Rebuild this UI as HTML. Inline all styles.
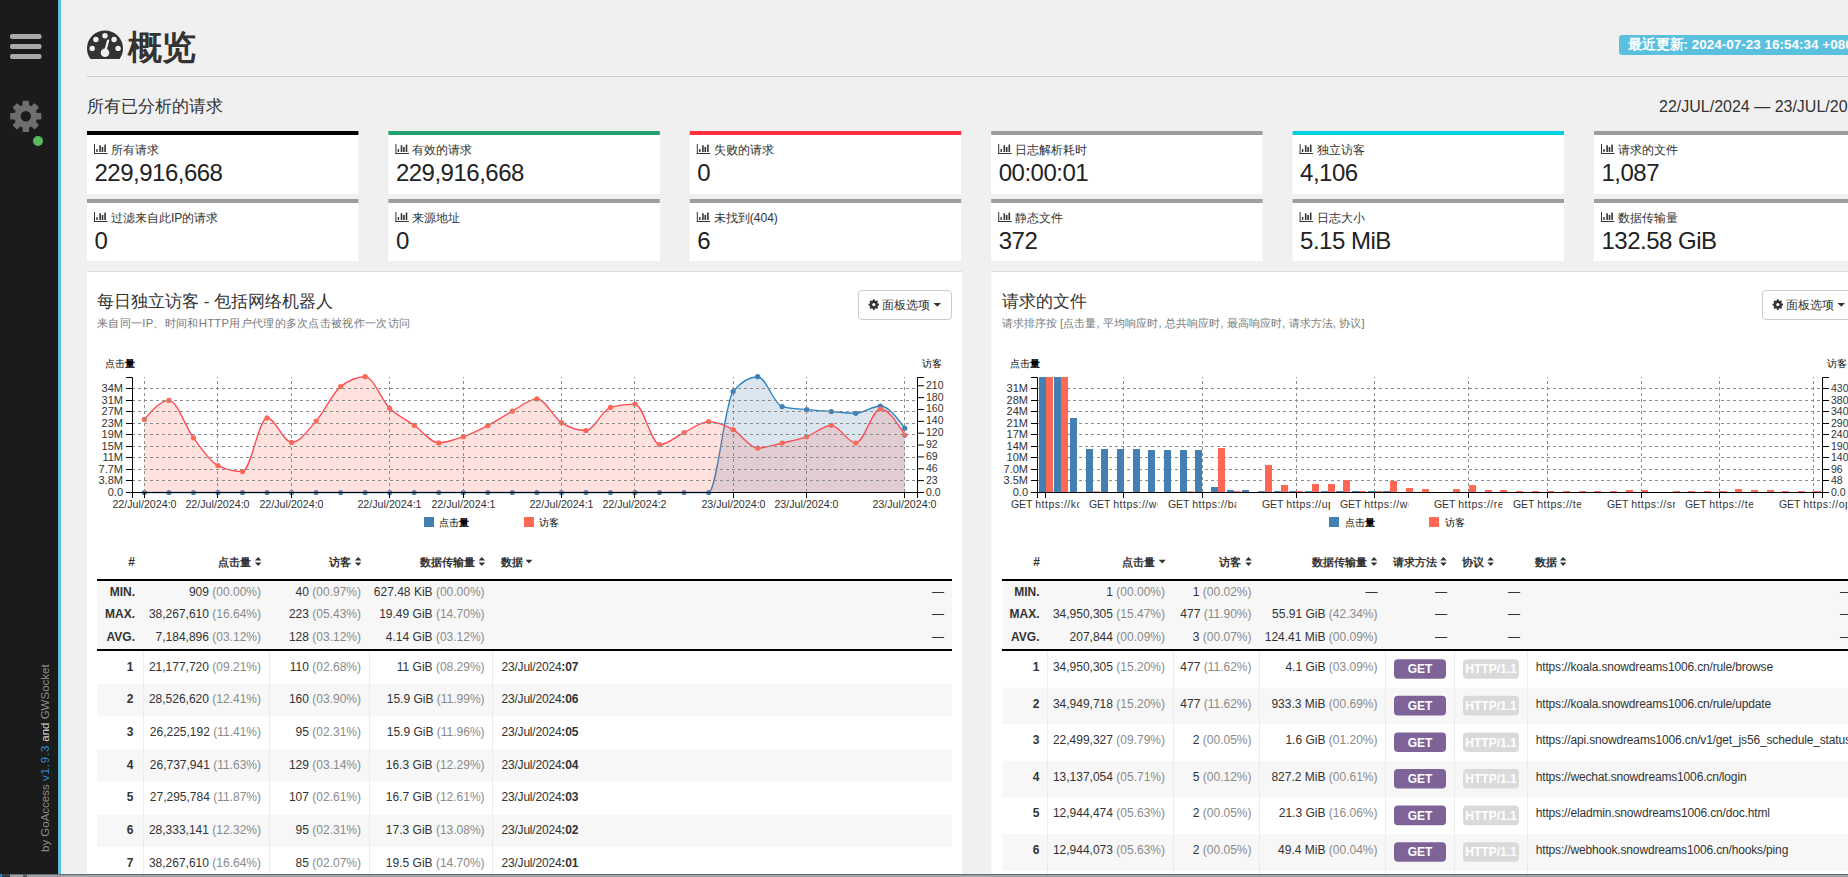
<!DOCTYPE html><html><head><meta charset="utf-8"><title>GoAccess</title><style>html,body{margin:0;padding:0;overflow:hidden;background:#f0f0f0;width:1848px;height:877px}svg{display:block;font-family:"Liberation Sans",sans-serif}</style></head><body><svg width="1848" height="877" viewBox="0 0 1848 877"><rect x="0" y="0" width="1848" height="877" fill="#f0f0f0" /><rect x="0" y="0" width="58" height="877" fill="#1b1b1b" /><rect x="58" y="0" width="3" height="877" fill="#5bc0de" /><rect x="10" y="34" width="31.5" height="5" fill="#a9a9a9" rx="2"/><rect x="10" y="44" width="31.5" height="5" fill="#a9a9a9" rx="2"/><rect x="10" y="54" width="31.5" height="5" fill="#a9a9a9" rx="2"/><g fill="#6e6e6e"><circle cx="25.8" cy="116.3" r="11.5"/><rect x="22.55" y="100.7" width="6.5" height="6.1" rx="1" transform="rotate(0.0 25.8 116.3)"/><rect x="22.55" y="100.7" width="6.5" height="6.1" rx="1" transform="rotate(45.0 25.8 116.3)"/><rect x="22.55" y="100.7" width="6.5" height="6.1" rx="1" transform="rotate(90.0 25.8 116.3)"/><rect x="22.55" y="100.7" width="6.5" height="6.1" rx="1" transform="rotate(135.0 25.8 116.3)"/><rect x="22.55" y="100.7" width="6.5" height="6.1" rx="1" transform="rotate(180.0 25.8 116.3)"/><rect x="22.55" y="100.7" width="6.5" height="6.1" rx="1" transform="rotate(225.0 25.8 116.3)"/><rect x="22.55" y="100.7" width="6.5" height="6.1" rx="1" transform="rotate(270.0 25.8 116.3)"/><rect x="22.55" y="100.7" width="6.5" height="6.1" rx="1" transform="rotate(315.0 25.8 116.3)"/></g><circle cx="25.8" cy="116.3" r="5.2" fill="#1b1b1b"/><circle cx="38" cy="141" r="5" fill="#5cb85c"/><text transform="translate(49.3,852) rotate(-90)" font-size="11.5" fill="#8a8a8a">by GoAccess <tspan fill="#2a8ed8" letter-spacing="0.8">v1.9.3</tspan> <tspan fill="#d8d8d8">and</tspan> GWSocket</text><g><path d="M90.4,59 A18,18 0 1 1 119.6,59 Z" fill="#333"/><circle cx="105" cy="35.8" r="2.7" fill="#f0f0f0"/><circle cx="95.9" cy="39.5" r="2.7" fill="#f0f0f0"/><circle cx="114.1" cy="39.5" r="2.7" fill="#f0f0f0"/><circle cx="92.2" cy="48.4" r="2.7" fill="#f0f0f0"/><circle cx="118.1" cy="48.4" r="2.7" fill="#f0f0f0"/><circle cx="105" cy="52.7" r="4.3" fill="#f0f0f0"/><line x1="105" y1="52" x2="108.1" y2="40.6" stroke="#f0f0f0" stroke-width="2.3" stroke-linecap="round"/></g><text x="127.5" y="59" font-size="33.5" fill="#333" font-weight="bold" text-anchor="start" >概览</text><rect x="87" y="76" width="1761" height="1" fill="#cfcfcf" /><rect x="1619" y="35" width="300" height="20" fill="#5bc0de" rx="3"/><text x="1627.5" y="49.1" font-size="13.5" fill="#fff" font-weight="bold" text-anchor="start" >最近更新: 2024-07-23 16:54:34 +0800</text><text x="87" y="111.5" font-size="17" fill="#333" font-weight="normal" text-anchor="start" >所有已分析的请求</text><text x="1659" y="112" font-size="16" fill="#333" font-weight="normal" text-anchor="start" >22/JUL/2024 — 23/JUL/2024</text><rect x="87.0" y="131" width="271.4" height="4" fill="#000" /><rect x="87.0" y="135" width="271.4" height="59" fill="#fff" /><g fill="#333"><rect x="94.0" y="144" width="1" height="10"/><rect x="94.0" y="153" width="13.5" height="1"/><rect x="96.3" y="149" width="1.4" height="3"/><rect x="99.3" y="145.3" width="1.6" height="6.7"/><rect x="101.7" y="147" width="1.6" height="5"/><rect x="104.3" y="144.6" width="1.6" height="7.4"/></g><text x="111.0" y="154" font-size="12" fill="#333" font-weight="normal" text-anchor="start" >所有请求</text><text x="94.5" y="180.5" font-size="24" fill="#222" font-weight="normal" text-anchor="start" letter-spacing="-0.5">229,916,668</text><rect x="388.4" y="131" width="271.4" height="4" fill="#23a16f" /><rect x="388.4" y="135" width="271.4" height="59" fill="#fff" /><g fill="#333"><rect x="395.4" y="144" width="1" height="10"/><rect x="395.4" y="153" width="13.5" height="1"/><rect x="397.7" y="149" width="1.4" height="3"/><rect x="400.7" y="145.3" width="1.6" height="6.7"/><rect x="403.09999999999997" y="147" width="1.6" height="5"/><rect x="405.7" y="144.6" width="1.6" height="7.4"/></g><text x="412.4" y="154" font-size="12" fill="#333" font-weight="normal" text-anchor="start" >有效的请求</text><text x="395.9" y="180.5" font-size="24" fill="#222" font-weight="normal" text-anchor="start" letter-spacing="-0.5">229,916,668</text><rect x="689.8" y="131" width="271.4" height="4" fill="#ff2f3f" /><rect x="689.8" y="135" width="271.4" height="59" fill="#fff" /><g fill="#333"><rect x="696.8" y="144" width="1" height="10"/><rect x="696.8" y="153" width="13.5" height="1"/><rect x="699.0999999999999" y="149" width="1.4" height="3"/><rect x="702.0999999999999" y="145.3" width="1.6" height="6.7"/><rect x="704.5" y="147" width="1.6" height="5"/><rect x="707.0999999999999" y="144.6" width="1.6" height="7.4"/></g><text x="713.8" y="154" font-size="12" fill="#333" font-weight="normal" text-anchor="start" >失败的请求</text><text x="697.3" y="180.5" font-size="24" fill="#222" font-weight="normal" text-anchor="start" letter-spacing="-0.5">0</text><rect x="991.1999999999999" y="131" width="271.4" height="4" fill="#9e9e9e" /><rect x="991.1999999999999" y="135" width="271.4" height="59" fill="#fff" /><g fill="#333"><rect x="998.1999999999999" y="144" width="1" height="10"/><rect x="998.1999999999999" y="153" width="13.5" height="1"/><rect x="1000.4999999999999" y="149" width="1.4" height="3"/><rect x="1003.4999999999999" y="145.3" width="1.6" height="6.7"/><rect x="1005.9" y="147" width="1.6" height="5"/><rect x="1008.4999999999999" y="144.6" width="1.6" height="7.4"/></g><text x="1015.1999999999999" y="154" font-size="12" fill="#333" font-weight="normal" text-anchor="start" >日志解析耗时</text><text x="998.6999999999999" y="180.5" font-size="24" fill="#222" font-weight="normal" text-anchor="start" letter-spacing="-0.5">00:00:01</text><rect x="1292.6" y="131" width="271.4" height="4" fill="#00d1e0" /><rect x="1292.6" y="135" width="271.4" height="59" fill="#fff" /><g fill="#333"><rect x="1299.6" y="144" width="1" height="10"/><rect x="1299.6" y="153" width="13.5" height="1"/><rect x="1301.8999999999999" y="149" width="1.4" height="3"/><rect x="1304.8999999999999" y="145.3" width="1.6" height="6.7"/><rect x="1307.3" y="147" width="1.6" height="5"/><rect x="1309.8999999999999" y="144.6" width="1.6" height="7.4"/></g><text x="1316.6" y="154" font-size="12" fill="#333" font-weight="normal" text-anchor="start" >独立访客</text><text x="1300.1" y="180.5" font-size="24" fill="#222" font-weight="normal" text-anchor="start" letter-spacing="-0.5">4,106</text><rect x="1594.0" y="131" width="271.4" height="4" fill="#9e9e9e" /><rect x="1594.0" y="135" width="271.4" height="59" fill="#fff" /><g fill="#333"><rect x="1601.0" y="144" width="1" height="10"/><rect x="1601.0" y="153" width="13.5" height="1"/><rect x="1603.3" y="149" width="1.4" height="3"/><rect x="1606.3" y="145.3" width="1.6" height="6.7"/><rect x="1608.7" y="147" width="1.6" height="5"/><rect x="1611.3" y="144.6" width="1.6" height="7.4"/></g><text x="1618.0" y="154" font-size="12" fill="#333" font-weight="normal" text-anchor="start" >请求的文件</text><text x="1601.5" y="180.5" font-size="24" fill="#222" font-weight="normal" text-anchor="start" letter-spacing="-0.5">1,087</text><rect x="87.0" y="199" width="271.4" height="4" fill="#9e9e9e" /><rect x="87.0" y="203" width="271.4" height="58" fill="#fff" /><g fill="#333"><rect x="94.0" y="212" width="1" height="10"/><rect x="94.0" y="221" width="13.5" height="1"/><rect x="96.3" y="217" width="1.4" height="3"/><rect x="99.3" y="213.3" width="1.6" height="6.7"/><rect x="101.7" y="215" width="1.6" height="5"/><rect x="104.3" y="212.6" width="1.6" height="7.4"/></g><text x="111.0" y="222" font-size="12" fill="#333" font-weight="normal" text-anchor="start" >过滤来自此IP的请求</text><text x="94.5" y="248.5" font-size="24" fill="#222" font-weight="normal" text-anchor="start" letter-spacing="-0.5">0</text><rect x="388.4" y="199" width="271.4" height="4" fill="#9e9e9e" /><rect x="388.4" y="203" width="271.4" height="58" fill="#fff" /><g fill="#333"><rect x="395.4" y="212" width="1" height="10"/><rect x="395.4" y="221" width="13.5" height="1"/><rect x="397.7" y="217" width="1.4" height="3"/><rect x="400.7" y="213.3" width="1.6" height="6.7"/><rect x="403.09999999999997" y="215" width="1.6" height="5"/><rect x="405.7" y="212.6" width="1.6" height="7.4"/></g><text x="412.4" y="222" font-size="12" fill="#333" font-weight="normal" text-anchor="start" >来源地址</text><text x="395.9" y="248.5" font-size="24" fill="#222" font-weight="normal" text-anchor="start" letter-spacing="-0.5">0</text><rect x="689.8" y="199" width="271.4" height="4" fill="#9e9e9e" /><rect x="689.8" y="203" width="271.4" height="58" fill="#fff" /><g fill="#333"><rect x="696.8" y="212" width="1" height="10"/><rect x="696.8" y="221" width="13.5" height="1"/><rect x="699.0999999999999" y="217" width="1.4" height="3"/><rect x="702.0999999999999" y="213.3" width="1.6" height="6.7"/><rect x="704.5" y="215" width="1.6" height="5"/><rect x="707.0999999999999" y="212.6" width="1.6" height="7.4"/></g><text x="713.8" y="222" font-size="12" fill="#333" font-weight="normal" text-anchor="start" >未找到(404)</text><text x="697.3" y="248.5" font-size="24" fill="#222" font-weight="normal" text-anchor="start" letter-spacing="-0.5">6</text><rect x="991.1999999999999" y="199" width="271.4" height="4" fill="#9e9e9e" /><rect x="991.1999999999999" y="203" width="271.4" height="58" fill="#fff" /><g fill="#333"><rect x="998.1999999999999" y="212" width="1" height="10"/><rect x="998.1999999999999" y="221" width="13.5" height="1"/><rect x="1000.4999999999999" y="217" width="1.4" height="3"/><rect x="1003.4999999999999" y="213.3" width="1.6" height="6.7"/><rect x="1005.9" y="215" width="1.6" height="5"/><rect x="1008.4999999999999" y="212.6" width="1.6" height="7.4"/></g><text x="1015.1999999999999" y="222" font-size="12" fill="#333" font-weight="normal" text-anchor="start" >静态文件</text><text x="998.6999999999999" y="248.5" font-size="24" fill="#222" font-weight="normal" text-anchor="start" letter-spacing="-0.5">372</text><rect x="1292.6" y="199" width="271.4" height="4" fill="#9e9e9e" /><rect x="1292.6" y="203" width="271.4" height="58" fill="#fff" /><g fill="#333"><rect x="1299.6" y="212" width="1" height="10"/><rect x="1299.6" y="221" width="13.5" height="1"/><rect x="1301.8999999999999" y="217" width="1.4" height="3"/><rect x="1304.8999999999999" y="213.3" width="1.6" height="6.7"/><rect x="1307.3" y="215" width="1.6" height="5"/><rect x="1309.8999999999999" y="212.6" width="1.6" height="7.4"/></g><text x="1316.6" y="222" font-size="12" fill="#333" font-weight="normal" text-anchor="start" >日志大小</text><text x="1300.1" y="248.5" font-size="24" fill="#222" font-weight="normal" text-anchor="start" letter-spacing="-0.5">5.15 MiB</text><rect x="1594.0" y="199" width="271.4" height="4" fill="#9e9e9e" /><rect x="1594.0" y="203" width="271.4" height="58" fill="#fff" /><g fill="#333"><rect x="1601.0" y="212" width="1" height="10"/><rect x="1601.0" y="221" width="13.5" height="1"/><rect x="1603.3" y="217" width="1.4" height="3"/><rect x="1606.3" y="213.3" width="1.6" height="6.7"/><rect x="1608.7" y="215" width="1.6" height="5"/><rect x="1611.3" y="212.6" width="1.6" height="7.4"/></g><text x="1618.0" y="222" font-size="12" fill="#333" font-weight="normal" text-anchor="start" >数据传输量</text><text x="1601.5" y="248.5" font-size="24" fill="#222" font-weight="normal" text-anchor="start" letter-spacing="-0.5">132.58 GiB</text><rect x="87" y="271" width="875" height="606" fill="#fff" /><rect x="87" y="271" width="875" height="1" fill="#dcdcdc" /><rect x="991.5" y="271" width="875" height="606" fill="#fff" /><rect x="991.5" y="271" width="875" height="1" fill="#dcdcdc" /><text x="97" y="307" font-size="17" fill="#333" font-weight="normal" text-anchor="start" >每日独立访客 - 包括网络机器人</text><text x="97" y="327" font-size="11.3" fill="#777" font-weight="normal" text-anchor="start" letter-spacing="0.3">来自同一IP、时间和HTTP用户代理的多次点击被视作一次访问</text><rect x="858.5" y="290.5" width="93" height="29" rx="3.5" fill="#fff" stroke="#cccccc" stroke-width="1"/><g fill="#333"><circle cx="873.8" cy="304.6" r="3.9"/><rect x="872.65" y="299.3" width="2.3" height="3.4" rx="1" transform="rotate(0.0 873.8 304.6)"/><rect x="872.65" y="299.3" width="2.3" height="3.4" rx="1" transform="rotate(45.0 873.8 304.6)"/><rect x="872.65" y="299.3" width="2.3" height="3.4" rx="1" transform="rotate(90.0 873.8 304.6)"/><rect x="872.65" y="299.3" width="2.3" height="3.4" rx="1" transform="rotate(135.0 873.8 304.6)"/><rect x="872.65" y="299.3" width="2.3" height="3.4" rx="1" transform="rotate(180.0 873.8 304.6)"/><rect x="872.65" y="299.3" width="2.3" height="3.4" rx="1" transform="rotate(225.0 873.8 304.6)"/><rect x="872.65" y="299.3" width="2.3" height="3.4" rx="1" transform="rotate(270.0 873.8 304.6)"/><rect x="872.65" y="299.3" width="2.3" height="3.4" rx="1" transform="rotate(315.0 873.8 304.6)"/></g><circle cx="873.8" cy="304.6" r="1.6" fill="#fff"/><text x="882" y="309" font-size="12" fill="#333" font-weight="normal" text-anchor="start" >面板选项</text><path d="M933.5,303.0 L941.0,303.0 L937.25,306.8 Z" fill="#333"/><text x="1001.5" y="307" font-size="17" fill="#333" font-weight="normal" text-anchor="start" >请求的文件</text><text x="1001.5" y="327" font-size="11.3" fill="#777" font-weight="normal" text-anchor="start" letter-spacing="0.08">请求排序按 [点击量, 平均响应时, 总共响应时, 最高响应时, 请求方法, 协议]</text><rect x="1762.5" y="290.5" width="93" height="29" rx="3.5" fill="#fff" stroke="#cccccc" stroke-width="1"/><g fill="#333"><circle cx="1777.8" cy="304.6" r="3.9"/><rect x="1776.6499999999999" y="299.3" width="2.3" height="3.4" rx="1" transform="rotate(0.0 1777.8 304.6)"/><rect x="1776.6499999999999" y="299.3" width="2.3" height="3.4" rx="1" transform="rotate(45.0 1777.8 304.6)"/><rect x="1776.6499999999999" y="299.3" width="2.3" height="3.4" rx="1" transform="rotate(90.0 1777.8 304.6)"/><rect x="1776.6499999999999" y="299.3" width="2.3" height="3.4" rx="1" transform="rotate(135.0 1777.8 304.6)"/><rect x="1776.6499999999999" y="299.3" width="2.3" height="3.4" rx="1" transform="rotate(180.0 1777.8 304.6)"/><rect x="1776.6499999999999" y="299.3" width="2.3" height="3.4" rx="1" transform="rotate(225.0 1777.8 304.6)"/><rect x="1776.6499999999999" y="299.3" width="2.3" height="3.4" rx="1" transform="rotate(270.0 1777.8 304.6)"/><rect x="1776.6499999999999" y="299.3" width="2.3" height="3.4" rx="1" transform="rotate(315.0 1777.8 304.6)"/></g><circle cx="1777.8" cy="304.6" r="1.6" fill="#fff"/><text x="1786" y="309" font-size="12" fill="#333" font-weight="normal" text-anchor="start" >面板选项</text><path d="M1837.5,303.0 L1845.0,303.0 L1841.25,306.8 Z" fill="#333"/><path d="M144.40,492.50C152.58,492.50,160.75,492.50,168.93,492.50C177.11,492.50,185.28,492.50,193.46,492.50C201.64,492.50,209.81,492.50,217.99,492.50C226.17,492.50,234.34,492.50,242.52,492.50C250.70,492.50,258.87,492.50,267.05,492.50C275.23,492.50,283.40,492.50,291.58,492.50C299.76,492.50,307.93,492.50,316.11,492.50C324.29,492.50,332.46,492.50,340.64,492.50C348.82,492.50,356.99,492.50,365.17,492.50C373.35,492.50,381.52,492.50,389.70,492.50C397.88,492.50,406.05,492.50,414.23,492.50C422.41,492.50,430.58,492.50,438.76,492.50C446.94,492.50,455.11,492.50,463.29,492.50C471.47,492.50,479.64,492.50,487.82,492.50C496.00,492.50,504.17,492.50,512.35,492.50C520.53,492.50,528.70,492.50,536.88,492.50C545.06,492.50,553.23,492.50,561.41,492.50C569.59,492.50,577.76,492.50,585.94,492.50C594.12,492.50,602.29,492.50,610.47,492.50C618.65,492.50,626.82,492.50,635.00,492.50C643.18,492.50,651.35,492.50,659.53,492.50C667.71,492.50,675.88,492.50,684.06,492.50C692.24,492.50,700.41,492.50,708.59,492.50C716.77,492.50,724.94,401.37,733.12,391.50C741.30,381.63,749.47,376.70,757.65,376.70C765.83,376.70,774.00,404.53,782.18,406.60C790.36,408.67,798.53,408.88,806.71,409.70C814.89,410.52,823.06,410.90,831.24,411.50C839.42,412.10,847.59,413.30,855.77,413.30C863.95,413.30,872.12,406.00,880.30,406.00C888.48,406.00,896.65,417.15,904.83,428.30 L904.83,492.5 L144.4,492.5 Z" fill="#447fb3" fill-opacity="0.2"/><path d="M144.40,492.50C152.58,492.50,160.75,492.50,168.93,492.50C177.11,492.50,185.28,492.50,193.46,492.50C201.64,492.50,209.81,492.50,217.99,492.50C226.17,492.50,234.34,492.50,242.52,492.50C250.70,492.50,258.87,492.50,267.05,492.50C275.23,492.50,283.40,492.50,291.58,492.50C299.76,492.50,307.93,492.50,316.11,492.50C324.29,492.50,332.46,492.50,340.64,492.50C348.82,492.50,356.99,492.50,365.17,492.50C373.35,492.50,381.52,492.50,389.70,492.50C397.88,492.50,406.05,492.50,414.23,492.50C422.41,492.50,430.58,492.50,438.76,492.50C446.94,492.50,455.11,492.50,463.29,492.50C471.47,492.50,479.64,492.50,487.82,492.50C496.00,492.50,504.17,492.50,512.35,492.50C520.53,492.50,528.70,492.50,536.88,492.50C545.06,492.50,553.23,492.50,561.41,492.50C569.59,492.50,577.76,492.50,585.94,492.50C594.12,492.50,602.29,492.50,610.47,492.50C618.65,492.50,626.82,492.50,635.00,492.50C643.18,492.50,651.35,492.50,659.53,492.50C667.71,492.50,675.88,492.50,684.06,492.50C692.24,492.50,700.41,492.50,708.59,492.50C716.77,492.50,724.94,401.37,733.12,391.50C741.30,381.63,749.47,376.70,757.65,376.70C765.83,376.70,774.00,404.53,782.18,406.60C790.36,408.67,798.53,408.88,806.71,409.70C814.89,410.52,823.06,410.90,831.24,411.50C839.42,412.10,847.59,413.30,855.77,413.30C863.95,413.30,872.12,406.00,880.30,406.00C888.48,406.00,896.65,417.15,904.83,428.30" fill="none" stroke="#2683c6" stroke-width="1.35"/><circle cx="144.40" cy="492.5" r="2.6" fill="#447fb3"/><circle cx="168.93" cy="492.5" r="2.6" fill="#447fb3"/><circle cx="193.46" cy="492.5" r="2.6" fill="#447fb3"/><circle cx="217.99" cy="492.5" r="2.6" fill="#447fb3"/><circle cx="242.52" cy="492.5" r="2.6" fill="#447fb3"/><circle cx="267.05" cy="492.5" r="2.6" fill="#447fb3"/><circle cx="291.58" cy="492.5" r="2.6" fill="#447fb3"/><circle cx="316.11" cy="492.5" r="2.6" fill="#447fb3"/><circle cx="340.64" cy="492.5" r="2.6" fill="#447fb3"/><circle cx="365.17" cy="492.5" r="2.6" fill="#447fb3"/><circle cx="389.70" cy="492.5" r="2.6" fill="#447fb3"/><circle cx="414.23" cy="492.5" r="2.6" fill="#447fb3"/><circle cx="438.76" cy="492.5" r="2.6" fill="#447fb3"/><circle cx="463.29" cy="492.5" r="2.6" fill="#447fb3"/><circle cx="487.82" cy="492.5" r="2.6" fill="#447fb3"/><circle cx="512.35" cy="492.5" r="2.6" fill="#447fb3"/><circle cx="536.88" cy="492.5" r="2.6" fill="#447fb3"/><circle cx="561.41" cy="492.5" r="2.6" fill="#447fb3"/><circle cx="585.94" cy="492.5" r="2.6" fill="#447fb3"/><circle cx="610.47" cy="492.5" r="2.6" fill="#447fb3"/><circle cx="635.00" cy="492.5" r="2.6" fill="#447fb3"/><circle cx="659.53" cy="492.5" r="2.6" fill="#447fb3"/><circle cx="684.06" cy="492.5" r="2.6" fill="#447fb3"/><circle cx="708.59" cy="492.5" r="2.6" fill="#447fb3"/><circle cx="733.12" cy="391.5" r="2.6" fill="#447fb3"/><circle cx="757.65" cy="376.7" r="2.6" fill="#447fb3"/><circle cx="782.18" cy="406.6" r="2.6" fill="#447fb3"/><circle cx="806.71" cy="409.7" r="2.6" fill="#447fb3"/><circle cx="831.24" cy="411.5" r="2.6" fill="#447fb3"/><circle cx="855.77" cy="413.3" r="2.6" fill="#447fb3"/><circle cx="880.30" cy="406.0" r="2.6" fill="#447fb3"/><circle cx="904.83" cy="428.3" r="2.6" fill="#447fb3"/><path d="M144.40,419.40C152.58,409.90,160.75,400.40,168.93,400.40C177.11,400.40,185.28,426.93,193.46,437.80C201.64,448.67,209.81,461.60,217.99,465.60C226.17,469.60,234.34,471.60,242.52,471.60C250.70,471.60,258.87,417.90,267.05,417.90C275.23,417.90,283.40,442.40,291.58,442.40C299.76,442.40,307.93,430.40,316.11,421.10C324.29,411.80,332.46,393.20,340.64,386.60C348.82,380.00,356.99,376.70,365.17,376.70C373.35,376.70,381.52,400.20,389.70,408.30C397.88,416.40,406.05,419.53,414.23,425.30C422.41,431.07,430.58,442.90,438.76,442.90C446.94,442.90,455.11,439.58,463.29,436.70C471.47,433.82,479.64,429.85,487.82,425.60C496.00,421.35,504.17,415.65,512.35,411.20C520.53,406.75,528.70,398.90,536.88,398.90C545.06,398.90,553.23,417.33,561.41,422.60C569.59,427.87,577.76,430.50,585.94,430.50C594.12,430.50,602.29,409.60,610.47,407.40C618.65,405.20,626.82,404.10,635.00,404.10C643.18,404.10,651.35,444.60,659.53,444.60C667.71,444.60,675.88,436.43,684.06,432.60C692.24,428.77,700.41,421.60,708.59,421.60C716.77,421.60,724.94,425.18,733.12,429.60C741.30,434.02,749.47,448.10,757.65,448.10C765.83,448.10,774.00,444.90,782.18,443.00C790.36,441.10,798.53,439.65,806.71,436.70C814.89,433.75,823.06,425.30,831.24,425.30C839.42,425.30,847.59,443.00,855.77,443.00C863.95,443.00,872.12,409.00,880.30,409.00C888.48,409.00,896.65,422.10,904.83,435.20 L904.83,492.5 L144.4,492.5 Z" fill="#ff6854" fill-opacity="0.2"/><path d="M144.40,419.40C152.58,409.90,160.75,400.40,168.93,400.40C177.11,400.40,185.28,426.93,193.46,437.80C201.64,448.67,209.81,461.60,217.99,465.60C226.17,469.60,234.34,471.60,242.52,471.60C250.70,471.60,258.87,417.90,267.05,417.90C275.23,417.90,283.40,442.40,291.58,442.40C299.76,442.40,307.93,430.40,316.11,421.10C324.29,411.80,332.46,393.20,340.64,386.60C348.82,380.00,356.99,376.70,365.17,376.70C373.35,376.70,381.52,400.20,389.70,408.30C397.88,416.40,406.05,419.53,414.23,425.30C422.41,431.07,430.58,442.90,438.76,442.90C446.94,442.90,455.11,439.58,463.29,436.70C471.47,433.82,479.64,429.85,487.82,425.60C496.00,421.35,504.17,415.65,512.35,411.20C520.53,406.75,528.70,398.90,536.88,398.90C545.06,398.90,553.23,417.33,561.41,422.60C569.59,427.87,577.76,430.50,585.94,430.50C594.12,430.50,602.29,409.60,610.47,407.40C618.65,405.20,626.82,404.10,635.00,404.10C643.18,404.10,651.35,444.60,659.53,444.60C667.71,444.60,675.88,436.43,684.06,432.60C692.24,428.77,700.41,421.60,708.59,421.60C716.77,421.60,724.94,425.18,733.12,429.60C741.30,434.02,749.47,448.10,757.65,448.10C765.83,448.10,774.00,444.90,782.18,443.00C790.36,441.10,798.53,439.65,806.71,436.70C814.89,433.75,823.06,425.30,831.24,425.30C839.42,425.30,847.59,443.00,855.77,443.00C863.95,443.00,872.12,409.00,880.30,409.00C888.48,409.00,896.65,422.10,904.83,435.20" fill="none" stroke="#ff4a55" stroke-width="1.35"/><circle cx="144.40" cy="419.4" r="2.6" fill="#ff6854"/><circle cx="168.93" cy="400.4" r="2.6" fill="#ff6854"/><circle cx="193.46" cy="437.8" r="2.6" fill="#ff6854"/><circle cx="217.99" cy="465.6" r="2.6" fill="#ff6854"/><circle cx="242.52" cy="471.6" r="2.6" fill="#ff6854"/><circle cx="267.05" cy="417.9" r="2.6" fill="#ff6854"/><circle cx="291.58" cy="442.4" r="2.6" fill="#ff6854"/><circle cx="316.11" cy="421.1" r="2.6" fill="#ff6854"/><circle cx="340.64" cy="386.6" r="2.6" fill="#ff6854"/><circle cx="365.17" cy="376.7" r="2.6" fill="#ff6854"/><circle cx="389.70" cy="408.3" r="2.6" fill="#ff6854"/><circle cx="414.23" cy="425.3" r="2.6" fill="#ff6854"/><circle cx="438.76" cy="442.9" r="2.6" fill="#ff6854"/><circle cx="463.29" cy="436.7" r="2.6" fill="#ff6854"/><circle cx="487.82" cy="425.6" r="2.6" fill="#ff6854"/><circle cx="512.35" cy="411.2" r="2.6" fill="#ff6854"/><circle cx="536.88" cy="398.9" r="2.6" fill="#ff6854"/><circle cx="561.41" cy="422.6" r="2.6" fill="#ff6854"/><circle cx="585.94" cy="430.5" r="2.6" fill="#ff6854"/><circle cx="610.47" cy="407.4" r="2.6" fill="#ff6854"/><circle cx="635.00" cy="404.1" r="2.6" fill="#ff6854"/><circle cx="659.53" cy="444.6" r="2.6" fill="#ff6854"/><circle cx="684.06" cy="432.6" r="2.6" fill="#ff6854"/><circle cx="708.59" cy="421.6" r="2.6" fill="#ff6854"/><circle cx="733.12" cy="429.6" r="2.6" fill="#ff6854"/><circle cx="757.65" cy="448.1" r="2.6" fill="#ff6854"/><circle cx="782.18" cy="443.0" r="2.6" fill="#ff6854"/><circle cx="806.71" cy="436.7" r="2.6" fill="#ff6854"/><circle cx="831.24" cy="425.3" r="2.6" fill="#ff6854"/><circle cx="855.77" cy="443.0" r="2.6" fill="#ff6854"/><circle cx="880.30" cy="409.0" r="2.6" fill="#ff6854"/><circle cx="904.83" cy="435.2" r="2.6" fill="#ff6854"/><line x1="132" y1="480.5" x2="917" y2="480.5" stroke="#8c8c8c" stroke-width="1" stroke-dasharray="3,3"/><line x1="132" y1="469.5" x2="917" y2="469.5" stroke="#8c8c8c" stroke-width="1" stroke-dasharray="3,3"/><line x1="132" y1="457.5" x2="917" y2="457.5" stroke="#8c8c8c" stroke-width="1" stroke-dasharray="3,3"/><line x1="132" y1="446.5" x2="917" y2="446.5" stroke="#8c8c8c" stroke-width="1" stroke-dasharray="3,3"/><line x1="132" y1="434.5" x2="917" y2="434.5" stroke="#8c8c8c" stroke-width="1" stroke-dasharray="3,3"/><line x1="132" y1="423.5" x2="917" y2="423.5" stroke="#8c8c8c" stroke-width="1" stroke-dasharray="3,3"/><line x1="132" y1="411.5" x2="917" y2="411.5" stroke="#8c8c8c" stroke-width="1" stroke-dasharray="3,3"/><line x1="132" y1="400.5" x2="917" y2="400.5" stroke="#8c8c8c" stroke-width="1" stroke-dasharray="3,3"/><line x1="132" y1="388.5" x2="917" y2="388.5" stroke="#8c8c8c" stroke-width="1" stroke-dasharray="3,3"/><line x1="144.5" y1="492" x2="144.5" y2="377" stroke="#8c8c8c" stroke-width="1" stroke-dasharray="3,3"/><line x1="217.5" y1="492" x2="217.5" y2="377" stroke="#8c8c8c" stroke-width="1" stroke-dasharray="3,3"/><line x1="291.5" y1="492" x2="291.5" y2="377" stroke="#8c8c8c" stroke-width="1" stroke-dasharray="3,3"/><line x1="389.5" y1="492" x2="389.5" y2="377" stroke="#8c8c8c" stroke-width="1" stroke-dasharray="3,3"/><line x1="463.5" y1="492" x2="463.5" y2="377" stroke="#8c8c8c" stroke-width="1" stroke-dasharray="3,3"/><line x1="561.5" y1="492" x2="561.5" y2="377" stroke="#8c8c8c" stroke-width="1" stroke-dasharray="3,3"/><line x1="634.5" y1="492" x2="634.5" y2="377" stroke="#8c8c8c" stroke-width="1" stroke-dasharray="3,3"/><line x1="733.5" y1="492" x2="733.5" y2="377" stroke="#8c8c8c" stroke-width="1" stroke-dasharray="3,3"/><line x1="806.5" y1="492" x2="806.5" y2="377" stroke="#8c8c8c" stroke-width="1" stroke-dasharray="3,3"/><line x1="904.5" y1="492" x2="904.5" y2="377" stroke="#8c8c8c" stroke-width="1" stroke-dasharray="3,3"/><path d="M126,377.5 H132.5 V492.5 H126" fill="none" stroke="#000" stroke-width="1"/><line x1="126" y1="492.5" x2="132.5" y2="492.5" stroke="#000"/><text x="123" y="496.4" font-size="11" fill="#333" text-anchor="end">0.0</text><line x1="126" y1="480.5" x2="132.5" y2="480.5" stroke="#000"/><text x="123" y="484.4" font-size="11" fill="#333" text-anchor="end">3.8M</text><line x1="126" y1="469.5" x2="132.5" y2="469.5" stroke="#000"/><text x="123" y="473.4" font-size="11" fill="#333" text-anchor="end">7.7M</text><line x1="126" y1="457.5" x2="132.5" y2="457.5" stroke="#000"/><text x="123" y="461.4" font-size="11" fill="#333" text-anchor="end">11M</text><line x1="126" y1="446.5" x2="132.5" y2="446.5" stroke="#000"/><text x="123" y="450.4" font-size="11" fill="#333" text-anchor="end">15M</text><line x1="126" y1="434.5" x2="132.5" y2="434.5" stroke="#000"/><text x="123" y="438.4" font-size="11" fill="#333" text-anchor="end">19M</text><line x1="126" y1="423.5" x2="132.5" y2="423.5" stroke="#000"/><text x="123" y="427.4" font-size="11" fill="#333" text-anchor="end">23M</text><line x1="126" y1="411.5" x2="132.5" y2="411.5" stroke="#000"/><text x="123" y="415.4" font-size="11" fill="#333" text-anchor="end">27M</text><line x1="126" y1="400.5" x2="132.5" y2="400.5" stroke="#000"/><text x="123" y="404.4" font-size="11" fill="#333" text-anchor="end">31M</text><line x1="126" y1="388.5" x2="132.5" y2="388.5" stroke="#000"/><text x="123" y="392.4" font-size="11" fill="#333" text-anchor="end">34M</text><path d="M924,377.5 H917.5 V492.5 H924" fill="none" stroke="#000" stroke-width="1"/><line x1="917.5" y1="492.5" x2="924" y2="492.5" stroke="#000"/><text x="926" y="495.5" font-size="10.5" fill="#333">0.0</text><line x1="917.5" y1="480.639" x2="924" y2="480.639" stroke="#000"/><text x="926" y="483.639" font-size="10.5" fill="#333">23</text><line x1="917.5" y1="468.778" x2="924" y2="468.778" stroke="#000"/><text x="926" y="471.778" font-size="10.5" fill="#333">46</text><line x1="917.5" y1="456.91700000000003" x2="924" y2="456.91700000000003" stroke="#000"/><text x="926" y="459.91700000000003" font-size="10.5" fill="#333">69</text><line x1="917.5" y1="445.056" x2="924" y2="445.056" stroke="#000"/><text x="926" y="448.056" font-size="10.5" fill="#333">92</text><line x1="917.5" y1="433.195" x2="924" y2="433.195" stroke="#000"/><text x="926" y="436.195" font-size="10.5" fill="#333">120</text><line x1="917.5" y1="421.334" x2="924" y2="421.334" stroke="#000"/><text x="926" y="424.334" font-size="10.5" fill="#333">140</text><line x1="917.5" y1="409.473" x2="924" y2="409.473" stroke="#000"/><text x="926" y="412.473" font-size="10.5" fill="#333">160</text><line x1="917.5" y1="397.61199999999997" x2="924" y2="397.61199999999997" stroke="#000"/><text x="926" y="400.61199999999997" font-size="10.5" fill="#333">180</text><line x1="917.5" y1="385.751" x2="924" y2="385.751" stroke="#000"/><text x="926" y="388.751" font-size="10.5" fill="#333">210</text><path d="M132.5,498 V492.5 H917.5 V498" fill="none" stroke="#000" stroke-width="1"/><line x1="144.5" y1="492.5" x2="144.5" y2="498" stroke="#000"/><clipPath id="lc0"><rect x="112.4" y="495" width="64" height="20"/></clipPath><text x="112.4" y="507.6" font-size="10.7" fill="#333" letter-spacing="0" clip-path="url(#lc0)">22/Jul/2024:00</text><line x1="217.5" y1="492.5" x2="217.5" y2="498" stroke="#000"/><clipPath id="lc1"><rect x="185.4" y="495" width="64" height="20"/></clipPath><text x="185.4" y="507.6" font-size="10.7" fill="#333" letter-spacing="0" clip-path="url(#lc1)">22/Jul/2024:00</text><line x1="291.5" y1="492.5" x2="291.5" y2="498" stroke="#000"/><clipPath id="lc2"><rect x="259.4" y="495" width="64" height="20"/></clipPath><text x="259.4" y="507.6" font-size="10.7" fill="#333" letter-spacing="0" clip-path="url(#lc2)">22/Jul/2024:00</text><line x1="389.5" y1="492.5" x2="389.5" y2="498" stroke="#000"/><clipPath id="lc3"><rect x="357.4" y="495" width="64" height="20"/></clipPath><text x="357.4" y="507.6" font-size="10.7" fill="#333" letter-spacing="0" clip-path="url(#lc3)">22/Jul/2024:10</text><line x1="463.5" y1="492.5" x2="463.5" y2="498" stroke="#000"/><clipPath id="lc4"><rect x="431.4" y="495" width="64" height="20"/></clipPath><text x="431.4" y="507.6" font-size="10.7" fill="#333" letter-spacing="0" clip-path="url(#lc4)">22/Jul/2024:10</text><line x1="561.5" y1="492.5" x2="561.5" y2="498" stroke="#000"/><clipPath id="lc5"><rect x="529.4" y="495" width="64" height="20"/></clipPath><text x="529.4" y="507.6" font-size="10.7" fill="#333" letter-spacing="0" clip-path="url(#lc5)">22/Jul/2024:10</text><line x1="634.5" y1="492.5" x2="634.5" y2="498" stroke="#000"/><clipPath id="lc6"><rect x="602.4" y="495" width="64" height="20"/></clipPath><text x="602.4" y="507.6" font-size="10.7" fill="#333" letter-spacing="0" clip-path="url(#lc6)">22/Jul/2024:20</text><line x1="733.5" y1="492.5" x2="733.5" y2="498" stroke="#000"/><clipPath id="lc7"><rect x="701.4" y="495" width="64" height="20"/></clipPath><text x="701.4" y="507.6" font-size="10.7" fill="#333" letter-spacing="0" clip-path="url(#lc7)">23/Jul/2024:00</text><line x1="806.5" y1="492.5" x2="806.5" y2="498" stroke="#000"/><clipPath id="lc8"><rect x="774.4" y="495" width="64" height="20"/></clipPath><text x="774.4" y="507.6" font-size="10.7" fill="#333" letter-spacing="0" clip-path="url(#lc8)">23/Jul/2024:00</text><line x1="904.5" y1="492.5" x2="904.5" y2="498" stroke="#000"/><clipPath id="lc9"><rect x="872.4" y="495" width="64" height="20"/></clipPath><text x="872.4" y="507.6" font-size="10.7" fill="#333" letter-spacing="0" clip-path="url(#lc9)">23/Jul/2024:00</text><text x="104.5" y="366.5" font-size="10" fill="#000">点击<tspan font-weight="bold">量</tspan></text><text x="921.5" y="366.5" font-size="10" fill="#000">访客</text><rect x="424" y="517" width="10" height="10" fill="#447fb3" /><text x="439" y="526" font-size="10" fill="#000">点击<tspan font-weight="bold">量</tspan></text><rect x="524" y="517" width="10" height="10" fill="#ff6854" /><text x="539" y="526" font-size="10" fill="#000" font-weight="normal" text-anchor="start" >访客</text><line x1="1037" y1="480.5" x2="1822" y2="480.5" stroke="#8c8c8c" stroke-width="1" stroke-dasharray="3,3"/><line x1="1037" y1="469.5" x2="1822" y2="469.5" stroke="#8c8c8c" stroke-width="1" stroke-dasharray="3,3"/><line x1="1037" y1="457.5" x2="1822" y2="457.5" stroke="#8c8c8c" stroke-width="1" stroke-dasharray="3,3"/><line x1="1037" y1="446.5" x2="1822" y2="446.5" stroke="#8c8c8c" stroke-width="1" stroke-dasharray="3,3"/><line x1="1037" y1="434.5" x2="1822" y2="434.5" stroke="#8c8c8c" stroke-width="1" stroke-dasharray="3,3"/><line x1="1037" y1="423.5" x2="1822" y2="423.5" stroke="#8c8c8c" stroke-width="1" stroke-dasharray="3,3"/><line x1="1037" y1="411.5" x2="1822" y2="411.5" stroke="#8c8c8c" stroke-width="1" stroke-dasharray="3,3"/><line x1="1037" y1="400.5" x2="1822" y2="400.5" stroke="#8c8c8c" stroke-width="1" stroke-dasharray="3,3"/><line x1="1037" y1="388.5" x2="1822" y2="388.5" stroke="#8c8c8c" stroke-width="1" stroke-dasharray="3,3"/><line x1="1045.5" y1="492" x2="1045.5" y2="377" stroke="#8c8c8c" stroke-width="1" stroke-dasharray="3,3"/><line x1="1123.5" y1="492" x2="1123.5" y2="377" stroke="#8c8c8c" stroke-width="1" stroke-dasharray="3,3"/><line x1="1202.5" y1="492" x2="1202.5" y2="377" stroke="#8c8c8c" stroke-width="1" stroke-dasharray="3,3"/><line x1="1296.5" y1="492" x2="1296.5" y2="377" stroke="#8c8c8c" stroke-width="1" stroke-dasharray="3,3"/><line x1="1374.5" y1="492" x2="1374.5" y2="377" stroke="#8c8c8c" stroke-width="1" stroke-dasharray="3,3"/><line x1="1468.5" y1="492" x2="1468.5" y2="377" stroke="#8c8c8c" stroke-width="1" stroke-dasharray="3,3"/><line x1="1547.5" y1="492" x2="1547.5" y2="377" stroke="#8c8c8c" stroke-width="1" stroke-dasharray="3,3"/><line x1="1641.5" y1="492" x2="1641.5" y2="377" stroke="#8c8c8c" stroke-width="1" stroke-dasharray="3,3"/><line x1="1719.5" y1="492" x2="1719.5" y2="377" stroke="#8c8c8c" stroke-width="1" stroke-dasharray="3,3"/><line x1="1813.5" y1="492" x2="1813.5" y2="377" stroke="#8c8c8c" stroke-width="1" stroke-dasharray="3,3"/><rect x="1039" y="377" width="7" height="115.50" fill="#447fb3" /><rect x="1046" y="377" width="7" height="115.50" fill="#ff6854" /><rect x="1054" y="377" width="7" height="115.50" fill="#447fb3" /><rect x="1061" y="377" width="7" height="115.50" fill="#ff6854" /><rect x="1070" y="418" width="7" height="74.50" fill="#447fb3" /><rect x="1086" y="449" width="7" height="43.50" fill="#447fb3" /><rect x="1093" y="491.3" width="7" height="1.20" fill="#ff6854" /><rect x="1101" y="449" width="7" height="43.50" fill="#447fb3" /><rect x="1117" y="449" width="7" height="43.50" fill="#447fb3" /><rect x="1133" y="449" width="7" height="43.50" fill="#447fb3" /><rect x="1148" y="450" width="7" height="42.50" fill="#447fb3" /><rect x="1164" y="450" width="7" height="42.50" fill="#447fb3" /><rect x="1180" y="450" width="7" height="42.50" fill="#447fb3" /><rect x="1187" y="491.3" width="7" height="1.20" fill="#ff6854" /><rect x="1195" y="450" width="7" height="42.50" fill="#447fb3" /><rect x="1211" y="487" width="7" height="5.50" fill="#447fb3" /><rect x="1218" y="448" width="7" height="44.50" fill="#ff6854" /><rect x="1227" y="490" width="7" height="2.50" fill="#447fb3" /><rect x="1234" y="491.1" width="7" height="1.40" fill="#ff6854" /><rect x="1242" y="490" width="7" height="2.50" fill="#447fb3" /><rect x="1258" y="491.1" width="7" height="1.40" fill="#447fb3" /><rect x="1265" y="465" width="7" height="27.50" fill="#ff6854" /><rect x="1274" y="491" width="7" height="1.50" fill="#447fb3" /><rect x="1281" y="485" width="7" height="7.50" fill="#ff6854" /><rect x="1289" y="491" width="7" height="1.50" fill="#447fb3" /><rect x="1296" y="491" width="7" height="1.50" fill="#ff6854" /><rect x="1305" y="491" width="7" height="1.50" fill="#447fb3" /><rect x="1312" y="484" width="7" height="8.50" fill="#ff6854" /><rect x="1321" y="491" width="7" height="1.50" fill="#447fb3" /><rect x="1328" y="484" width="7" height="8.50" fill="#ff6854" /><rect x="1336" y="491" width="7" height="1.50" fill="#447fb3" /><rect x="1343" y="480.1" width="7" height="12.40" fill="#ff6854" /><rect x="1352" y="491" width="7" height="1.50" fill="#447fb3" /><rect x="1359" y="491" width="7" height="1.50" fill="#ff6854" /><rect x="1368" y="491" width="7" height="1.50" fill="#447fb3" /><rect x="1375" y="491" width="7" height="1.50" fill="#ff6854" /><rect x="1383" y="491" width="7" height="1.50" fill="#447fb3" /><rect x="1390" y="481" width="7" height="11.50" fill="#ff6854" /><rect x="1406" y="488" width="7" height="4.50" fill="#ff6854" /><rect x="1422" y="489" width="7" height="3.50" fill="#ff6854" /><rect x="1453" y="489" width="7" height="3.50" fill="#ff6854" /><rect x="1469" y="485.1" width="7" height="7.40" fill="#ff6854" /><rect x="1485" y="490" width="7" height="2.50" fill="#ff6854" /><rect x="1500" y="490" width="7" height="2.50" fill="#ff6854" /><rect x="1516" y="491" width="7" height="1.50" fill="#ff6854" /><rect x="1532" y="491" width="7" height="1.50" fill="#ff6854" /><rect x="1547" y="491" width="7" height="1.50" fill="#ff6854" /><rect x="1563" y="491" width="7" height="1.50" fill="#ff6854" /><rect x="1579" y="491" width="7" height="1.50" fill="#ff6854" /><rect x="1594" y="491" width="7" height="1.50" fill="#ff6854" /><rect x="1610" y="491" width="7" height="1.50" fill="#ff6854" /><rect x="1626" y="490" width="7" height="2.50" fill="#ff6854" /><rect x="1641" y="490" width="7" height="2.50" fill="#ff6854" /><rect x="1673" y="491" width="7" height="1.50" fill="#ff6854" /><rect x="1688" y="491" width="7" height="1.50" fill="#ff6854" /><rect x="1704" y="491" width="7" height="1.50" fill="#ff6854" /><rect x="1720" y="491" width="7" height="1.50" fill="#ff6854" /><rect x="1735" y="489" width="7" height="3.50" fill="#ff6854" /><rect x="1751" y="490" width="7" height="2.50" fill="#ff6854" /><rect x="1767" y="490" width="7" height="2.50" fill="#ff6854" /><rect x="1782" y="491" width="7" height="1.50" fill="#ff6854" /><rect x="1798" y="491" width="7" height="1.50" fill="#ff6854" /><rect x="1814" y="491" width="7" height="1.50" fill="#ff6854" /><path d="M1031,377.5 H1037.5 V492.5 H1031" fill="none" stroke="#000" stroke-width="1"/><line x1="1031" y1="492.5" x2="1037.5" y2="492.5" stroke="#000"/><text x="1028" y="496.4" font-size="11" fill="#333" text-anchor="end">0.0</text><line x1="1031" y1="480.5" x2="1037.5" y2="480.5" stroke="#000"/><text x="1028" y="484.4" font-size="11" fill="#333" text-anchor="end">3.5M</text><line x1="1031" y1="469.5" x2="1037.5" y2="469.5" stroke="#000"/><text x="1028" y="473.4" font-size="11" fill="#333" text-anchor="end">7.0M</text><line x1="1031" y1="457.5" x2="1037.5" y2="457.5" stroke="#000"/><text x="1028" y="461.4" font-size="11" fill="#333" text-anchor="end">10M</text><line x1="1031" y1="446.5" x2="1037.5" y2="446.5" stroke="#000"/><text x="1028" y="450.4" font-size="11" fill="#333" text-anchor="end">14M</text><line x1="1031" y1="434.5" x2="1037.5" y2="434.5" stroke="#000"/><text x="1028" y="438.4" font-size="11" fill="#333" text-anchor="end">17M</text><line x1="1031" y1="423.5" x2="1037.5" y2="423.5" stroke="#000"/><text x="1028" y="427.4" font-size="11" fill="#333" text-anchor="end">21M</text><line x1="1031" y1="411.5" x2="1037.5" y2="411.5" stroke="#000"/><text x="1028" y="415.4" font-size="11" fill="#333" text-anchor="end">24M</text><line x1="1031" y1="400.5" x2="1037.5" y2="400.5" stroke="#000"/><text x="1028" y="404.4" font-size="11" fill="#333" text-anchor="end">28M</text><line x1="1031" y1="388.5" x2="1037.5" y2="388.5" stroke="#000"/><text x="1028" y="392.4" font-size="11" fill="#333" text-anchor="end">31M</text><path d="M1829,377.5 H1822.5 V492.5 H1829" fill="none" stroke="#000" stroke-width="1"/><line x1="1822.5" y1="492.5" x2="1829" y2="492.5" stroke="#000"/><text x="1831" y="495.5" font-size="10.5" fill="#333">0.0</text><line x1="1822.5" y1="480.5" x2="1829" y2="480.5" stroke="#000"/><text x="1831" y="483.5" font-size="10.5" fill="#333">48</text><line x1="1822.5" y1="469.5" x2="1829" y2="469.5" stroke="#000"/><text x="1831" y="472.5" font-size="10.5" fill="#333">96</text><line x1="1822.5" y1="457.5" x2="1829" y2="457.5" stroke="#000"/><text x="1831" y="460.5" font-size="10.5" fill="#333">140</text><line x1="1822.5" y1="446.5" x2="1829" y2="446.5" stroke="#000"/><text x="1831" y="449.5" font-size="10.5" fill="#333">190</text><line x1="1822.5" y1="434.5" x2="1829" y2="434.5" stroke="#000"/><text x="1831" y="437.5" font-size="10.5" fill="#333">240</text><line x1="1822.5" y1="423.5" x2="1829" y2="423.5" stroke="#000"/><text x="1831" y="426.5" font-size="10.5" fill="#333">290</text><line x1="1822.5" y1="411.5" x2="1829" y2="411.5" stroke="#000"/><text x="1831" y="414.5" font-size="10.5" fill="#333">340</text><line x1="1822.5" y1="400.5" x2="1829" y2="400.5" stroke="#000"/><text x="1831" y="403.5" font-size="10.5" fill="#333">380</text><line x1="1822.5" y1="388.5" x2="1829" y2="388.5" stroke="#000"/><text x="1831" y="391.5" font-size="10.5" fill="#333">430</text><path d="M1037.5,498 V492.5 H1822.5 V498" fill="none" stroke="#000" stroke-width="1"/><line x1="1045.5" y1="492.5" x2="1045.5" y2="498" stroke="#000"/><clipPath id="bc0"><rect x="1010.9" y="495" width="68.5" height="20"/></clipPath><text x="1010.9" y="507.6" font-size="10.5" fill="#333" clip-path="url(#bc0)">GET <tspan letter-spacing="0.5">https://koala</tspan></text><line x1="1123.5" y1="492.5" x2="1123.5" y2="498" stroke="#000"/><clipPath id="bc1"><rect x="1088.9" y="495" width="68.5" height="20"/></clipPath><text x="1088.9" y="507.6" font-size="10.5" fill="#333" clip-path="url(#bc1)">GET <tspan letter-spacing="0.5">https://wechat</tspan></text><line x1="1202.5" y1="492.5" x2="1202.5" y2="498" stroke="#000"/><clipPath id="bc2"><rect x="1167.9" y="495" width="68.5" height="20"/></clipPath><text x="1167.9" y="507.6" font-size="10.5" fill="#333" clip-path="url(#bc2)">GET <tspan letter-spacing="0.5">https://bark</tspan></text><line x1="1296.5" y1="492.5" x2="1296.5" y2="498" stroke="#000"/><clipPath id="bc3"><rect x="1261.9" y="495" width="68.5" height="20"/></clipPath><text x="1261.9" y="507.6" font-size="10.5" fill="#333" clip-path="url(#bc3)">GET <tspan letter-spacing="0.5">https://upload</tspan></text><line x1="1374.5" y1="492.5" x2="1374.5" y2="498" stroke="#000"/><clipPath id="bc4"><rect x="1339.9" y="495" width="68.5" height="20"/></clipPath><text x="1339.9" y="507.6" font-size="10.5" fill="#333" clip-path="url(#bc4)">GET <tspan letter-spacing="0.5">https://wechat</tspan></text><line x1="1468.5" y1="492.5" x2="1468.5" y2="498" stroke="#000"/><clipPath id="bc5"><rect x="1433.9" y="495" width="68.5" height="20"/></clipPath><text x="1433.9" y="507.6" font-size="10.5" fill="#333" clip-path="url(#bc5)">GET <tspan letter-spacing="0.5">https://resource</tspan></text><line x1="1547.5" y1="492.5" x2="1547.5" y2="498" stroke="#000"/><clipPath id="bc6"><rect x="1512.9" y="495" width="68.5" height="20"/></clipPath><text x="1512.9" y="507.6" font-size="10.5" fill="#333" clip-path="url(#bc6)">GET <tspan letter-spacing="0.5">https://tech</tspan></text><line x1="1641.5" y1="492.5" x2="1641.5" y2="498" stroke="#000"/><clipPath id="bc7"><rect x="1606.9" y="495" width="68.5" height="20"/></clipPath><text x="1606.9" y="507.6" font-size="10.5" fill="#333" clip-path="url(#bc7)">GET <tspan letter-spacing="0.5">https://snowdreams</tspan></text><line x1="1719.5" y1="492.5" x2="1719.5" y2="498" stroke="#000"/><clipPath id="bc8"><rect x="1684.9" y="495" width="68.5" height="20"/></clipPath><text x="1684.9" y="507.6" font-size="10.5" fill="#333" clip-path="url(#bc8)">GET <tspan letter-spacing="0.5">https://tech</tspan></text><line x1="1813.5" y1="492.5" x2="1813.5" y2="498" stroke="#000"/><clipPath id="bc9"><rect x="1778.9" y="495" width="68.5" height="20"/></clipPath><text x="1778.9" y="507.6" font-size="10.5" fill="#333" clip-path="url(#bc9)">GET <tspan letter-spacing="0.5">https://open</tspan></text><text x="1009.5" y="366.5" font-size="10" fill="#000">点击<tspan font-weight="bold">量</tspan></text><text x="1826.5" y="366.5" font-size="10" fill="#000">访客</text><rect x="1329" y="517" width="10" height="10" fill="#447fb3" /><text x="1344.8" y="526" font-size="10" fill="#000">点击<tspan font-weight="bold">量</tspan></text><rect x="1429" y="517" width="10" height="10" fill="#ff6854" /><text x="1444.5" y="526" font-size="10" fill="#000" font-weight="normal" text-anchor="start" >访客</text><rect x="97" y="579" width="855" height="2" fill="#000" /><rect x="97" y="581" width="855" height="68" fill="#f7f7f7" /><rect x="97" y="649" width="855" height="2" fill="#000" /><rect x="97" y="683.67" width="855" height="32.67" fill="#f7f7f7" /><rect x="97" y="749.01" width="855" height="32.67" fill="#f7f7f7" /><rect x="97" y="814.35" width="855" height="32.67" fill="#f7f7f7" /><rect x="143" y="651" width="1" height="226" fill="#ececec" /><rect x="269" y="651" width="1" height="226" fill="#ececec" /><rect x="369" y="651" width="1" height="226" fill="#ececec" /><rect x="492" y="651" width="1" height="226" fill="#ececec" /><text x="135" y="566" font-size="12" fill="#333" font-weight="bold" text-anchor="end" >#</text><text x="250.89999999999998" y="566" font-size="11" fill="#333" font-weight="bold" text-anchor="end">点击量</text><path d="M254.89999999999998,560.5 L258.15,556.9 L261.4,560.5 Z M254.89999999999998,562.5 L258.15,566.1 L261.4,562.5 Z" fill="#333"/><text x="350.9" y="566" font-size="11" fill="#333" font-weight="bold" text-anchor="end">访客</text><path d="M354.9,560.5 L358.15,556.9 L361.4,560.5 Z M354.9,562.5 L358.15,566.1 L361.4,562.5 Z" fill="#333"/><text x="474.6" y="566" font-size="11" fill="#333" font-weight="bold" text-anchor="end">数据传输量</text><path d="M478.6,560.5 L481.85,556.9 L485.1,560.5 Z M478.6,562.5 L481.85,566.1 L485.1,562.5 Z" fill="#333"/><text x="500.5" y="566" font-size="11" fill="#333" font-weight="bold">数据</text><path d="M525.5,559.7 L532.5,559.7 L529.0,563.5 Z" fill="#333"/><text x="135" y="596" font-size="12" fill="#333" text-anchor="end" font-weight="bold">MIN.</text><text x="261" y="596" font-size="12" fill="#333" text-anchor="end">909 <tspan fill="#8a8a8a">(00.00%)</tspan></text><text x="361" y="596" font-size="12" fill="#333" text-anchor="end">40 <tspan fill="#8a8a8a">(00.97%)</tspan></text><text x="484.6" y="596" font-size="12" fill="#333" text-anchor="end">627.48 KiB <tspan fill="#8a8a8a">(00.00%)</tspan></text><text x="944" y="596" font-size="12" fill="#333" text-anchor="end">—</text><text x="135" y="618" font-size="12" fill="#333" text-anchor="end" font-weight="bold">MAX.</text><text x="261" y="618" font-size="12" fill="#333" text-anchor="end">38,267,610 <tspan fill="#8a8a8a">(16.64%)</tspan></text><text x="361" y="618" font-size="12" fill="#333" text-anchor="end">223 <tspan fill="#8a8a8a">(05.43%)</tspan></text><text x="484.6" y="618" font-size="12" fill="#333" text-anchor="end">19.49 GiB <tspan fill="#8a8a8a">(14.70%)</tspan></text><text x="944" y="618" font-size="12" fill="#333" text-anchor="end">—</text><text x="135" y="640.5" font-size="12" fill="#333" text-anchor="end" font-weight="bold">AVG.</text><text x="261" y="640.5" font-size="12" fill="#333" text-anchor="end">7,184,896 <tspan fill="#8a8a8a">(03.12%)</tspan></text><text x="361" y="640.5" font-size="12" fill="#333" text-anchor="end">128 <tspan fill="#8a8a8a">(03.12%)</tspan></text><text x="484.6" y="640.5" font-size="12" fill="#333" text-anchor="end">4.14 GiB <tspan fill="#8a8a8a">(03.12%)</tspan></text><text x="944" y="640.5" font-size="12" fill="#333" text-anchor="end">—</text><text x="133.5" y="670.74" font-size="12" fill="#333" text-anchor="end" font-weight="bold">1</text><text x="261" y="670.74" font-size="12" fill="#333" text-anchor="end">21,177,720 <tspan fill="#8a8a8a">(09.21%)</tspan></text><text x="361" y="670.74" font-size="12" fill="#333" text-anchor="end">110 <tspan fill="#8a8a8a">(02.68%)</tspan></text><text x="484.6" y="670.74" font-size="12" fill="#333" text-anchor="end">11 GiB <tspan fill="#8a8a8a">(08.29%)</tspan></text><text x="501.5" y="670.74" font-size="12" fill="#333" letter-spacing="-0.2">23/Jul/2024<tspan font-weight="bold">:07</tspan></text><text x="133.5" y="703.40" font-size="12" fill="#333" text-anchor="end" font-weight="bold">2</text><text x="261" y="703.40" font-size="12" fill="#333" text-anchor="end">28,526,620 <tspan fill="#8a8a8a">(12.41%)</tspan></text><text x="361" y="703.40" font-size="12" fill="#333" text-anchor="end">160 <tspan fill="#8a8a8a">(03.90%)</tspan></text><text x="484.6" y="703.40" font-size="12" fill="#333" text-anchor="end">15.9 GiB <tspan fill="#8a8a8a">(11.99%)</tspan></text><text x="501.5" y="703.40" font-size="12" fill="#333" letter-spacing="-0.2">23/Jul/2024<tspan font-weight="bold">:06</tspan></text><text x="133.5" y="736.08" font-size="12" fill="#333" text-anchor="end" font-weight="bold">3</text><text x="261" y="736.08" font-size="12" fill="#333" text-anchor="end">26,225,192 <tspan fill="#8a8a8a">(11.41%)</tspan></text><text x="361" y="736.08" font-size="12" fill="#333" text-anchor="end">95 <tspan fill="#8a8a8a">(02.31%)</tspan></text><text x="484.6" y="736.08" font-size="12" fill="#333" text-anchor="end">15.9 GiB <tspan fill="#8a8a8a">(11.96%)</tspan></text><text x="501.5" y="736.08" font-size="12" fill="#333" letter-spacing="-0.2">23/Jul/2024<tspan font-weight="bold">:05</tspan></text><text x="133.5" y="768.75" font-size="12" fill="#333" text-anchor="end" font-weight="bold">4</text><text x="261" y="768.75" font-size="12" fill="#333" text-anchor="end">26,737,941 <tspan fill="#8a8a8a">(11.63%)</tspan></text><text x="361" y="768.75" font-size="12" fill="#333" text-anchor="end">129 <tspan fill="#8a8a8a">(03.14%)</tspan></text><text x="484.6" y="768.75" font-size="12" fill="#333" text-anchor="end">16.3 GiB <tspan fill="#8a8a8a">(12.29%)</tspan></text><text x="501.5" y="768.75" font-size="12" fill="#333" letter-spacing="-0.2">23/Jul/2024<tspan font-weight="bold">:04</tspan></text><text x="133.5" y="801.42" font-size="12" fill="#333" text-anchor="end" font-weight="bold">5</text><text x="261" y="801.42" font-size="12" fill="#333" text-anchor="end">27,295,784 <tspan fill="#8a8a8a">(11.87%)</tspan></text><text x="361" y="801.42" font-size="12" fill="#333" text-anchor="end">107 <tspan fill="#8a8a8a">(02.61%)</tspan></text><text x="484.6" y="801.42" font-size="12" fill="#333" text-anchor="end">16.7 GiB <tspan fill="#8a8a8a">(12.61%)</tspan></text><text x="501.5" y="801.42" font-size="12" fill="#333" letter-spacing="-0.2">23/Jul/2024<tspan font-weight="bold">:03</tspan></text><text x="133.5" y="834.09" font-size="12" fill="#333" text-anchor="end" font-weight="bold">6</text><text x="261" y="834.09" font-size="12" fill="#333" text-anchor="end">28,333,141 <tspan fill="#8a8a8a">(12.32%)</tspan></text><text x="361" y="834.09" font-size="12" fill="#333" text-anchor="end">95 <tspan fill="#8a8a8a">(02.31%)</tspan></text><text x="484.6" y="834.09" font-size="12" fill="#333" text-anchor="end">17.3 GiB <tspan fill="#8a8a8a">(13.08%)</tspan></text><text x="501.5" y="834.09" font-size="12" fill="#333" letter-spacing="-0.2">23/Jul/2024<tspan font-weight="bold">:02</tspan></text><text x="133.5" y="866.75" font-size="12" fill="#333" text-anchor="end" font-weight="bold">7</text><text x="261" y="866.75" font-size="12" fill="#333" text-anchor="end">38,267,610 <tspan fill="#8a8a8a">(16.64%)</tspan></text><text x="361" y="866.75" font-size="12" fill="#333" text-anchor="end">85 <tspan fill="#8a8a8a">(02.07%)</tspan></text><text x="484.6" y="866.75" font-size="12" fill="#333" text-anchor="end">19.5 GiB <tspan fill="#8a8a8a">(14.70%)</tspan></text><text x="501.5" y="866.75" font-size="12" fill="#333" letter-spacing="-0.2">23/Jul/2024<tspan font-weight="bold">:01</tspan></text><rect x="1002" y="579" width="854" height="2" fill="#000" /><rect x="1002" y="581" width="854" height="68" fill="#f7f7f7" /><rect x="1002" y="649" width="854" height="2" fill="#000" /><rect x="1002" y="687.60" width="854" height="36.60" fill="#f7f7f7" /><rect x="1002" y="760.80" width="854" height="36.60" fill="#f7f7f7" /><rect x="1002" y="834.00" width="854" height="36.60" fill="#f7f7f7" /><rect x="1047" y="651" width="1" height="226" fill="#ececec" /><rect x="1173" y="651" width="1" height="226" fill="#ececec" /><rect x="1259" y="651" width="1" height="226" fill="#ececec" /><rect x="1385" y="651" width="1" height="226" fill="#ececec" /><rect x="1454" y="651" width="1" height="226" fill="#ececec" /><rect x="1527" y="651" width="1" height="226" fill="#ececec" /><text x="1040" y="566" font-size="12" fill="#333" font-weight="bold" text-anchor="end" >#</text><text x="1154.7" y="566" font-size="11" fill="#333" font-weight="bold" text-anchor="end">点击量</text><path d="M1158.7,559.7 L1165.7,559.7 L1162.2,563.5 Z" fill="#333"/><text x="1241.3" y="566" font-size="11" fill="#333" font-weight="bold" text-anchor="end">访客</text><path d="M1245.3,560.5 L1248.55,556.9 L1251.8,560.5 Z M1245.3,562.5 L1248.55,566.1 L1251.8,562.5 Z" fill="#333"/><text x="1366.8" y="566" font-size="11" fill="#333" font-weight="bold" text-anchor="end">数据传输量</text><path d="M1370.8,560.5 L1374.05,556.9 L1377.3,560.5 Z M1370.8,562.5 L1374.05,566.1 L1377.3,562.5 Z" fill="#333"/><text x="1393.2" y="566" font-size="11" fill="#333" font-weight="bold">请求方法</text><path d="M1440.2,560.5 L1443.45,556.9 L1446.7,560.5 Z M1440.2,562.5 L1443.45,566.1 L1446.7,562.5 Z" fill="#333"/><text x="1462.4" y="566" font-size="11" fill="#333" font-weight="bold">协议</text><path d="M1487.4,560.5 L1490.65,556.9 L1493.9,560.5 Z M1487.4,562.5 L1490.65,566.1 L1493.9,562.5 Z" fill="#333"/><text x="1534.9" y="566" font-size="11" fill="#333" font-weight="bold">数据</text><path d="M1559.9,560.5 L1563.15,556.9 L1566.4,560.5 Z M1559.9,562.5 L1563.15,566.1 L1566.4,562.5 Z" fill="#333"/><text x="1039.5" y="596" font-size="12" fill="#333" text-anchor="end" font-weight="bold">MIN.</text><text x="1165" y="596" font-size="12" fill="#333" text-anchor="end">1 <tspan fill="#8a8a8a">(00.00%)</tspan></text><text x="1251.5" y="596" font-size="12" fill="#333" text-anchor="end">1 <tspan fill="#8a8a8a">(00.02%)</tspan></text><text x="1377.5" y="596" font-size="12" fill="#333" text-anchor="end">—</text><text x="1447" y="596" font-size="12" fill="#333" text-anchor="end">—</text><text x="1520" y="596" font-size="12" fill="#333" text-anchor="end">—</text><text x="1852" y="596" font-size="12" fill="#333" text-anchor="end">—</text><text x="1039.5" y="618" font-size="12" fill="#333" text-anchor="end" font-weight="bold">MAX.</text><text x="1165" y="618" font-size="12" fill="#333" text-anchor="end">34,950,305 <tspan fill="#8a8a8a">(15.47%)</tspan></text><text x="1251.5" y="618" font-size="12" fill="#333" text-anchor="end">477 <tspan fill="#8a8a8a">(11.90%)</tspan></text><text x="1377.5" y="618" font-size="12" fill="#333" text-anchor="end">55.91 GiB <tspan fill="#8a8a8a">(42.34%)</tspan></text><text x="1447" y="618" font-size="12" fill="#333" text-anchor="end">—</text><text x="1520" y="618" font-size="12" fill="#333" text-anchor="end">—</text><text x="1852" y="618" font-size="12" fill="#333" text-anchor="end">—</text><text x="1039.5" y="640.5" font-size="12" fill="#333" text-anchor="end" font-weight="bold">AVG.</text><text x="1165" y="640.5" font-size="12" fill="#333" text-anchor="end">207,844 <tspan fill="#8a8a8a">(00.09%)</tspan></text><text x="1251.5" y="640.5" font-size="12" fill="#333" text-anchor="end">3 <tspan fill="#8a8a8a">(00.07%)</tspan></text><text x="1377.5" y="640.5" font-size="12" fill="#333" text-anchor="end">124.41 MiB <tspan fill="#8a8a8a">(00.09%)</tspan></text><text x="1447" y="640.5" font-size="12" fill="#333" text-anchor="end">—</text><text x="1520" y="640.5" font-size="12" fill="#333" text-anchor="end">—</text><text x="1852" y="640.5" font-size="12" fill="#333" text-anchor="end">—</text><text x="1039.5" y="670.90" font-size="12" fill="#333" text-anchor="end" font-weight="bold">1</text><text x="1165" y="670.90" font-size="12" fill="#333" text-anchor="end">34,950,305 <tspan fill="#8a8a8a">(15.20%)</tspan></text><text x="1251.5" y="670.90" font-size="12" fill="#333" text-anchor="end">477 <tspan fill="#8a8a8a">(11.62%)</tspan></text><text x="1377.5" y="670.90" font-size="12" fill="#333" text-anchor="end">4.1 GiB <tspan fill="#8a8a8a">(03.09%)</tspan></text><rect x="1394" y="659.20" width="52" height="19.6" fill="#7e6399" rx="4"/><text x="1420" y="673.40" font-size="12" fill="#fff" font-weight="bold" text-anchor="middle">GET</text><rect x="1463" y="659.20" width="56" height="19.6" fill="#dadada" rx="4"/><text x="1491" y="673.40" font-size="12" fill="#fff" font-weight="bold" text-anchor="middle">HTTP/1.1</text><text x="1535.7" y="670.90" font-size="12" fill="#333" letter-spacing="-0.16">https://koala.snowdreams1006.cn/rule/browse</text><text x="1039.5" y="707.50" font-size="12" fill="#333" text-anchor="end" font-weight="bold">2</text><text x="1165" y="707.50" font-size="12" fill="#333" text-anchor="end">34,949,718 <tspan fill="#8a8a8a">(15.20%)</tspan></text><text x="1251.5" y="707.50" font-size="12" fill="#333" text-anchor="end">477 <tspan fill="#8a8a8a">(11.62%)</tspan></text><text x="1377.5" y="707.50" font-size="12" fill="#333" text-anchor="end">933.3 MiB <tspan fill="#8a8a8a">(00.69%)</tspan></text><rect x="1394" y="695.80" width="52" height="19.6" fill="#7e6399" rx="4"/><text x="1420" y="710.00" font-size="12" fill="#fff" font-weight="bold" text-anchor="middle">GET</text><rect x="1463" y="695.80" width="56" height="19.6" fill="#dadada" rx="4"/><text x="1491" y="710.00" font-size="12" fill="#fff" font-weight="bold" text-anchor="middle">HTTP/1.1</text><text x="1535.7" y="707.50" font-size="12" fill="#333" letter-spacing="-0.16">https://koala.snowdreams1006.cn/rule/update</text><text x="1039.5" y="744.10" font-size="12" fill="#333" text-anchor="end" font-weight="bold">3</text><text x="1165" y="744.10" font-size="12" fill="#333" text-anchor="end">22,499,327 <tspan fill="#8a8a8a">(09.79%)</tspan></text><text x="1251.5" y="744.10" font-size="12" fill="#333" text-anchor="end">2 <tspan fill="#8a8a8a">(00.05%)</tspan></text><text x="1377.5" y="744.10" font-size="12" fill="#333" text-anchor="end">1.6 GiB <tspan fill="#8a8a8a">(01.20%)</tspan></text><rect x="1394" y="732.40" width="52" height="19.6" fill="#7e6399" rx="4"/><text x="1420" y="746.60" font-size="12" fill="#fff" font-weight="bold" text-anchor="middle">GET</text><rect x="1463" y="732.40" width="56" height="19.6" fill="#dadada" rx="4"/><text x="1491" y="746.60" font-size="12" fill="#fff" font-weight="bold" text-anchor="middle">HTTP/1.1</text><text x="1535.7" y="744.10" font-size="12" fill="#333" letter-spacing="-0.16">https://api.snowdreams1006.cn/v1/get_js56_schedule_status</text><text x="1039.5" y="780.70" font-size="12" fill="#333" text-anchor="end" font-weight="bold">4</text><text x="1165" y="780.70" font-size="12" fill="#333" text-anchor="end">13,137,054 <tspan fill="#8a8a8a">(05.71%)</tspan></text><text x="1251.5" y="780.70" font-size="12" fill="#333" text-anchor="end">5 <tspan fill="#8a8a8a">(00.12%)</tspan></text><text x="1377.5" y="780.70" font-size="12" fill="#333" text-anchor="end">827.2 MiB <tspan fill="#8a8a8a">(00.61%)</tspan></text><rect x="1394" y="769.00" width="52" height="19.6" fill="#7e6399" rx="4"/><text x="1420" y="783.20" font-size="12" fill="#fff" font-weight="bold" text-anchor="middle">GET</text><rect x="1463" y="769.00" width="56" height="19.6" fill="#dadada" rx="4"/><text x="1491" y="783.20" font-size="12" fill="#fff" font-weight="bold" text-anchor="middle">HTTP/1.1</text><text x="1535.7" y="780.70" font-size="12" fill="#333" letter-spacing="-0.16">https://wechat.snowdreams1006.cn/login</text><text x="1039.5" y="817.30" font-size="12" fill="#333" text-anchor="end" font-weight="bold">5</text><text x="1165" y="817.30" font-size="12" fill="#333" text-anchor="end">12,944,474 <tspan fill="#8a8a8a">(05.63%)</tspan></text><text x="1251.5" y="817.30" font-size="12" fill="#333" text-anchor="end">2 <tspan fill="#8a8a8a">(00.05%)</tspan></text><text x="1377.5" y="817.30" font-size="12" fill="#333" text-anchor="end">21.3 GiB <tspan fill="#8a8a8a">(16.06%)</tspan></text><rect x="1394" y="805.60" width="52" height="19.6" fill="#7e6399" rx="4"/><text x="1420" y="819.80" font-size="12" fill="#fff" font-weight="bold" text-anchor="middle">GET</text><rect x="1463" y="805.60" width="56" height="19.6" fill="#dadada" rx="4"/><text x="1491" y="819.80" font-size="12" fill="#fff" font-weight="bold" text-anchor="middle">HTTP/1.1</text><text x="1535.7" y="817.30" font-size="12" fill="#333" letter-spacing="-0.16">https://eladmin.snowdreams1006.cn/doc.html</text><text x="1039.5" y="853.90" font-size="12" fill="#333" text-anchor="end" font-weight="bold">6</text><text x="1165" y="853.90" font-size="12" fill="#333" text-anchor="end">12,944,073 <tspan fill="#8a8a8a">(05.63%)</tspan></text><text x="1251.5" y="853.90" font-size="12" fill="#333" text-anchor="end">2 <tspan fill="#8a8a8a">(00.05%)</tspan></text><text x="1377.5" y="853.90" font-size="12" fill="#333" text-anchor="end">49.4 MiB <tspan fill="#8a8a8a">(00.04%)</tspan></text><rect x="1394" y="842.20" width="52" height="19.6" fill="#7e6399" rx="4"/><text x="1420" y="856.40" font-size="12" fill="#fff" font-weight="bold" text-anchor="middle">GET</text><rect x="1463" y="842.20" width="56" height="19.6" fill="#dadada" rx="4"/><text x="1491" y="856.40" font-size="12" fill="#fff" font-weight="bold" text-anchor="middle">HTTP/1.1</text><text x="1535.7" y="853.90" font-size="12" fill="#333" letter-spacing="-0.16">https://webhook.snowdreams1006.cn/hooks/ping</text><rect x="0" y="874" width="1848" height="3" fill="#a0a4a8" /><rect x="0" y="874" width="1848" height="1" fill="#66696d" /><rect x="0" y="874" width="2" height="3" fill="#1e88d8" /><rect x="2" y="874" width="8" height="3" fill="#3a3d42" /><rect x="23" y="874" width="4" height="3" fill="#585b60" /></svg></body></html>
